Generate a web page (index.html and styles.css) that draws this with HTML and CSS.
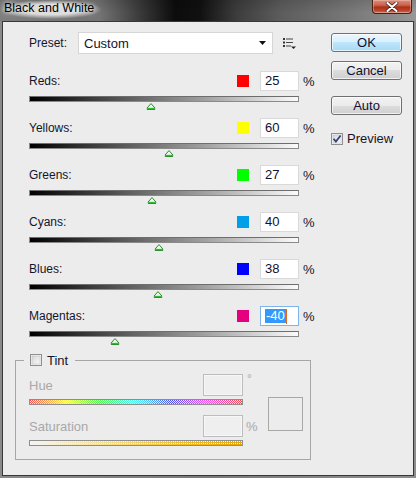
FILE: index.html
```html
<!DOCTYPE html>
<html lang="en">
<head>
<meta charset="utf-8">
<title>Black and White</title>
<link rel="stylesheet" href="styles.css">
</head>
<body>
<div class="window">
  <div class="titlebar">
    <span class="title">Black and White</span>
    <span class="close">
      <svg width="16" height="10" viewBox="0 0 16 10"><path d="M3.5 1 L12.5 9 M12.5 1 L3.5 9" stroke="#3a1008" stroke-width="3.4" stroke-linecap="round"/><path d="M3.5 1 L12.5 9 M12.5 1 L3.5 9" stroke="#fff" stroke-width="2.2" stroke-linecap="round"/></svg>
    </span>
  </div>
  <div class="client">
    <div class="main">
      <div class="preset-row">
        <span class="preset-label">Preset:</span>
        <div class="select">
          <span>Custom</span>
          <svg class="select-arrow" width="7" height="4" viewBox="0 0 7 4"><path d="M0 0 H7 L3.5 4 Z" fill="#111"/></svg>
        </div>
        <svg class="menu-icon" width="14" height="12" viewBox="0 0 14 12">
          <rect x="0" y="0" width="2" height="2" fill="#333"/><rect x="3" y="0.5" width="7" height="1" fill="#444"/>
          <rect x="0" y="3.5" width="2" height="2" fill="#333"/><rect x="3" y="4" width="7" height="1" fill="#444"/>
          <rect x="0" y="7" width="2" height="2" fill="#333"/><rect x="3" y="7.5" width="5" height="1" fill="#444"/>
          <path d="M8 8.5 H13 L10.5 11 Z" fill="#222"/>
        </svg>
      </div>

      <div class="channels">
        <div class="channel">
          <div class="channel-head">
            <span class="ch-label">Reds:</span>
            <span class="swatch sw-red"></span>
            <span class="num">25</span>
            <span class="pct">%</span>
          </div>
          <div class="track"></div>
          <div class="thumb-lane"><svg class="thumb" style="left:45%" width="9" height="7" viewBox="0 0 9 7"><use href="#thumb-shape"/></svg></div>
        </div>
        <div class="channel">
          <div class="channel-head">
            <span class="ch-label">Yellows:</span>
            <span class="swatch sw-yellow"></span>
            <span class="num">60</span>
            <span class="pct">%</span>
          </div>
          <div class="track"></div>
          <div class="thumb-lane"><svg class="thumb" style="left:52%" width="9" height="7" viewBox="0 0 9 7"><use href="#thumb-shape"/></svg></div>
        </div>
        <div class="channel">
          <div class="channel-head">
            <span class="ch-label">Greens:</span>
            <span class="swatch sw-green"></span>
            <span class="num">27</span>
            <span class="pct">%</span>
          </div>
          <div class="track"></div>
          <div class="thumb-lane"><svg class="thumb" style="left:45.4%" width="9" height="7" viewBox="0 0 9 7"><use href="#thumb-shape"/></svg></div>
        </div>
        <div class="channel">
          <div class="channel-head">
            <span class="ch-label">Cyans:</span>
            <span class="swatch sw-cyan"></span>
            <span class="num">40</span>
            <span class="pct">%</span>
          </div>
          <div class="track"></div>
          <div class="thumb-lane"><svg class="thumb" style="left:48%" width="9" height="7" viewBox="0 0 9 7"><use href="#thumb-shape"/></svg></div>
        </div>
        <div class="channel">
          <div class="channel-head">
            <span class="ch-label">Blues:</span>
            <span class="swatch sw-blue"></span>
            <span class="num">38</span>
            <span class="pct">%</span>
          </div>
          <div class="track"></div>
          <div class="thumb-lane"><svg class="thumb" style="left:47.6%" width="9" height="7" viewBox="0 0 9 7"><use href="#thumb-shape"/></svg></div>
        </div>
        <div class="channel">
          <div class="channel-head">
            <span class="ch-label">Magentas:</span>
            <span class="swatch sw-magenta"></span>
            <span class="num num-focus"><span class="sel">-40</span><span class="caret"></span></span>
            <span class="pct">%</span>
          </div>
          <div class="track"></div>
          <div class="thumb-lane"><svg class="thumb" style="left:32%" width="9" height="7" viewBox="0 0 9 7"><use href="#thumb-shape"/></svg></div>
        </div>
      </div>

      <fieldset class="tint">
        <legend class="tint-legend">
          <svg class="checkbox" width="12" height="12" viewBox="0 0 12 12"><use href="#check-box"/></svg>
          <span>Tint</span>
        </legend>
        <div class="tint-body">
          <div class="tint-controls">
            <div class="tint-row">
              <span class="dim-label">Hue</span>
              <span class="dim-input"></span>
              <span class="deg">°</span>
            </div>
            <div class="dim-bar hue-bar"></div>
            <div class="tint-row tint-row-sat">
              <span class="dim-label">Saturation</span>
              <span class="dim-input"></span>
              <span class="dim-pct">%</span>
            </div>
            <div class="dim-bar sat-bar"></div>
          </div>
          <div class="tint-preview"></div>
        </div>
      </fieldset>
    </div>

    <div class="side">
      <div class="btn btn-default">OK</div>
      <div class="btn btn-cancel">Cancel</div>
      <div class="btn btn-auto">Auto</div>
      <div class="preview-row">
        <svg class="checkbox" width="12" height="12" viewBox="0 0 12 12">
          <use href="#check-box"/>
          <path d="M2.6 5.8 L4.9 8.6 L9.6 2.6" fill="none" stroke="#2b3f7c" stroke-width="1.7"/>
        </svg>
        <span>Preview</span>
      </div>
    </div>
  </div>
</div>

<svg class="defs" width="0" height="0">
  <defs>
    <linearGradient id="thumb-fill" x1="0" y1="0" x2="0" y2="1">
      <stop offset="0" stop-color="#ffffff"/>
      <stop offset="0.6" stop-color="#e6f6e6"/>
      <stop offset="1" stop-color="#5fcf5f"/>
    </linearGradient>
    <linearGradient id="box-fill" x1="0" y1="0" x2="1" y2="1">
      <stop offset="0" stop-color="#d6d6d6"/>
      <stop offset="1" stop-color="#fbfbfb"/>
    </linearGradient>
    <g id="thumb-shape">
      <path d="M4.5 0.6 L8.4 5 V6.5 H0.6 V5 Z" fill="url(#thumb-fill)" stroke="#2a8a2a" stroke-width="1"/>
      <rect x="1" y="5" width="7" height="1.2" fill="#36b636"/>
    </g>
    <g id="check-box">
      <rect x="0.5" y="0.5" width="11" height="11" fill="#f4f4f4" stroke="#8e8f8f"/>
      <rect x="2" y="2" width="8" height="8" fill="url(#box-fill)" stroke="#b8b8b8" stroke-width="0.5"/>
    </g>
  </defs>
</svg>
</body>
</html>
```

FILE: styles.css
```css
* {
  box-sizing: border-box;
}

html,
body {
  margin: 0;
  padding: 0;
}

body {
  width: 416px;
  height: 478px;
  overflow: hidden;
  font-family: "Liberation Sans", Arial, sans-serif;
  font-size: 12px;
  color: #15152a;
}

.defs {
  position: absolute;
  width: 0;
  height: 0;
}

/* window chrome */
.window {
  width: 416px;
  height: 478px;
  display: flex;
  flex-direction: column;
  background: linear-gradient(to right, #8a8a8a, #7a7a7a 50%, #8e8e8e);
}

.titlebar {
  height: 21px;
  flex: none;
  display: flex;
  align-items: flex-start;
  background:
    linear-gradient(to bottom, rgba(0, 0, 0, 0.12), rgba(0, 0, 0, 0) 60%),
    linear-gradient(to right, #7e7e7e 0, #737373 100px, #3a3a3a 140px, #0c0c0c 175px, #101010 200px, #3b3b3b 235px, #5c5c5c 280px, #707070 330px, #858585 380px, #979797 416px);
}

.title {
  margin-left: 0;
  padding: 1px 8px 3px 4px;
  line-height: 15px;
  font-size: 12.5px;
  color: #000;
  background: radial-gradient(ellipse closest-side, rgba(225, 225, 225, 0.95) 55%, rgba(225, 225, 225, 0) 100%);
  text-shadow: 0 0 4px #e6e6e6, 0 0 7px #e6e6e6;
}

.close {
  margin-left: auto;
  margin-right: 4px;
  width: 40px;
  height: 14px;
  display: flex;
  align-items: center;
  justify-content: center;
  border: 1px solid #4b1f16;
  border-top: 0;
  border-radius: 0 0 4px 4px;
  background: linear-gradient(to bottom, #dc8f7d 0, #c9624c 40%, #ad2f16 55%, #bb4a30 85%, #d3806a 100%);
  box-shadow: inset 0 0 0 1px rgba(255, 220, 210, 0.35);
}

.client {
  margin: 0 2px 2px 2px;
  height: 455px;
  border: 1px solid #383838;
  background: #ececec;
  display: flex;
}

/* main column */
.main {
  margin-left: 12px;
  width: 302px;
  padding-top: 10px;
}

.preset-row {
  height: 22px;
  padding-left: 14px;
  display: flex;
  align-items: center;
}

.preset-label {
  width: 49px;
}

.select {
  width: 195px;
  height: 22px;
  background: #fff;
  border: 1px solid #d6d6d6;
  padding-left: 5px;
  display: flex;
  align-items: center;
  justify-content: space-between;
  padding-right: 6px;
  font-size: 13px;
}

.menu-icon {
  margin-left: 10px;
  margin-top: 2px;
}

.channels {
  margin-top: 17px;
  padding-left: 14px;
}

.channel-head {
  height: 20px;
  display: flex;
  align-items: center;
}

.ch-label {
  width: 208px;
}

.swatch {
  width: 12px;
  height: 12px;
  margin-right: 11px;
}

.sw-red { background: #ff0000; }
.sw-yellow { background: #ffff00; }
.sw-green { background: #00ff00; }
.sw-cyan { background: #00a0e9; }
.sw-blue { background: #0000ff; }
.sw-magenta { background: #e4007f; }

.num {
  width: 39px;
  height: 20px;
  background: #fff;
  border: 1px solid #d9d9d9;
  padding-left: 4px;
  font-size: 13px;
  line-height: 18px;
  color: #101030;
  display: flex;
  align-items: center;
}

.num-focus {
  border-color: #7eb4ea;
}

.sel {
  background: #3399ff;
  color: #fff;
  line-height: 14px;
  padding: 0 1px;
}

.caret {
  width: 1px;
  height: 15px;
  background: #e06a1a;
}

.pct {
  margin-left: 4px;
  font-size: 13px;
}

.track {
  margin-top: 5px;
  width: 270px;
  height: 6px;
  border: 1px solid #8a8a8a;
  border-top-color: #6e6e6e;
  background: linear-gradient(to right, #000 0, #5a5a5a 35%, #a0a0a0 65%, #fbfbfb 100%);
}

.thumb-lane {
  position: relative;
  width: 270px;
  height: 16px;
}

.thumb {
  position: absolute;
  top: 1px;
  transform: translateX(-50%);
}

/* tint group */
.tint {
  margin: 0;
  padding: 0;
  width: 296px;
  min-width: 0;
  border: 1px solid #a6a6a6;
}

.tint-legend {
  margin-left: 8px;
  padding: 0 7px 0 6px;
  height: 14px;
  display: flex;
  align-items: center;
  gap: 5px;
  font-size: 13px;
  color: #15152a;
}

.checkbox {
  flex: none;
  display: block;
}

.tint-body {
  padding: 7px 0 13px 13px;
  display: flex;
  align-items: flex-start;
}

.tint-controls {
  width: 230px;
}

.tint-row {
  height: 22px;
  display: flex;
  align-items: center;
}

.tint-row-sat {
  margin-top: 10px;
}

.dim-label {
  width: 174px;
  color: #a8a8a8;
  font-size: 13px;
}

.dim-input {
  width: 40px;
  height: 22px;
  border: 1px solid #bdbdbd;
  background: #efefef;
  box-shadow: inset 0 0 0 1px #f7f7f7;
}

.deg {
  align-self: flex-start;
  margin-left: 4px;
  line-height: 10px;
  color: #a8a8a8;
  font-size: 12px;
}

.dim-pct {
  margin-left: 3px;
  color: #a8a8a8;
  font-size: 13px;
}

.dim-bar {
  margin-top: 3px;
  width: 214px;
  height: 6px;
  border: 1px solid #8e8e8e;
}

/* disabled bars: colour ramp broken up by a 1px light checker */
.hue-bar {
  background:
    repeating-conic-gradient(#eeeeee 0 25%, transparent 0 50%) 0 0 / 2px 2px,
    linear-gradient(rgba(236, 236, 236, 0.3), rgba(236, 236, 236, 0.3)),
    linear-gradient(to right, #ff0000, #ffff00 17%, #00ff00 33%, #00ffff 50%, #0000ff 67%, #ff00ff 83%, #ff0000);
}

.sat-bar {
  background:
    conic-gradient(#f4f4f4 0 25%, transparent 0) 0 0 / 2px 2px,
    linear-gradient(to right, #f4f4f4, #f8dc80 40%, #f2bb20 75%, #eaa800);
}

.tint-preview {
  margin-left: 9px;
  margin-top: 23px;
  width: 35px;
  height: 34px;
  border: 1px solid #a8a8a8;
}

/* button column */
.side {
  margin-left: 14px;
  width: 71px;
  padding-top: 11px;
}

.btn {
  height: 19px;
  border: 1px solid #707070;
  border-radius: 3px;
  display: flex;
  align-items: center;
  justify-content: center;
  font-size: 13px;
  color: #101030;
  background: linear-gradient(to bottom, #f2f2f2 0, #ebebeb 50%, #dddddd 50%, #cfcfcf 100%);
  box-shadow: inset 0 0 0 1px rgba(255, 255, 255, 0.7);
}

.btn-default {
  border-color: #3c7fb1;
  background: linear-gradient(to bottom, #eaf6fd 0, #d9f0fc 50%, #bee6fd 50%, #a7d9f5 100%);
}

.btn-cancel {
  margin-top: 9px;
}

.btn-auto {
  margin-top: 16px;
}

.preview-row {
  margin-top: 16px;
  display: flex;
  align-items: center;
  gap: 4px;
  font-size: 13px;
}
```
